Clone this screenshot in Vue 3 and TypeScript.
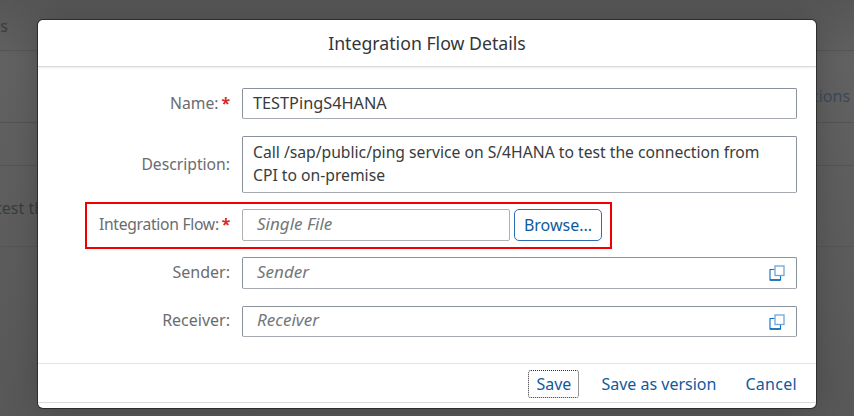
<script setup lang="ts">
interface Row { label: string; placeholder: string }
const valueRows: Row[] = [
  { label: 'Sender:', placeholder: 'Sender' },
  { label: 'Receiver:', placeholder: 'Receiver' },
]
</script>

<template>
  <div class="page">
    <div class="backdrop">
      <div class="bg-row bg-one"><span class="bg-text clip-left">Artifacts</span></div>
      <div class="bg-row bg-two"><span class="bg-text bg-actions">Actions</span></div>
      <div class="bg-row bg-three"></div>
      <div class="bg-row bg-four"><span class="bg-text clip-test">test the</span></div>
    </div>

    <section class="dialog">
      <header class="dialog-head">Integration Flow Details</header>
      <div class="dialog-body">
        <div class="row row-name">
          <label class="label">Name:<span class="star">*</span></label>
          <div class="field name-field">TESTPingS4HANA</div>
        </div>
        <div class="row row-desc">
          <label class="label">Description:</label>
          <div class="field area">Call /sap/public/ping service on S/4HANA to test the connection from<br />CPI to on-premise</div>
        </div>
        <div class="row row-file">
          <label class="label">Integration Flow:<span class="star">*</span></label>
          <div class="file-group">
            <div class="field placeholder file-input">Single File</div>
            <button class="browse" type="button">Browse...</button>
          </div>
          <div class="highlight"></div>
        </div>
        <div v-for="r in valueRows" :key="r.label" class="row row-value">
          <label class="label">{{ r.label }}</label>
          <div class="field placeholder with-icon">
            <span>{{ r.placeholder }}</span>
            <svg class="icon" width="16" height="16" viewBox="0 0 16 16" fill="none">
              <path d="M5.5 4.5H1v10.5h10.5V11" stroke="#0a6ed1" stroke-width="1.1" />
              <path d="M1 15h10.5" stroke="#0a5ea8" stroke-width="1.4" />
              <rect x="6" y="1" width="9" height="9.5" stroke="#6ea6dc" stroke-width="1.3" />
            </svg>
          </div>
        </div>
      </div>
      <footer class="dialog-foot">
        <button class="action focused" type="button">Save</button>
        <button class="action" type="button">Save as version</button>
        <button class="action last" type="button">Cancel</button>
      </footer>
      <div class="dialog-end"></div>
    </section>
  </div>
</template>

<style>
html, body { margin: 0; background: #5e5e5e; }
</style>

<style scoped>
.page {
  position: relative;
  width: 854px;
  height: 416px;
  overflow: hidden;
  font-family: "Noto Sans", "Open Sans", sans-serif;
  background: #5d5d5d;
}
.backdrop {
  height: 100%;
  background: linear-gradient(180deg, #565656 0, #626262 60px, #5e5e5e 200px, #585858 416px);
}
.bg-row { box-sizing: border-box; border-bottom: 1px solid #555; position: relative; }
.bg-one { height: 51px; }
.bg-two { height: 72px; }
.bg-three { height: 43px; }
.bg-four { height: 81px; }
.bg-text { color: #383d42; font-size: 16px; white-space: nowrap; }
.clip-left { position: absolute; right: 846px; top: 15px; }
.bg-actions { position: absolute; left: 795px; top: 34px; color: #3c4a5a; }
.clip-test { position: absolute; left: -4px; top: 31px; }

.dialog {
  position: absolute;
  left: 38px;
  top: 20px;
  width: 778px;
  height: 388px;
  box-sizing: border-box;
  display: flex;
  flex-direction: column;
  background: #fff;
  border-radius: 5px;
  box-shadow: 0 0 0 1px #2e2e2e, 0 0 36px rgba(0, 0, 0, 0.22);
  color: #32363a;
}
.dialog-head {
  height: 47px;
  flex: none;
  box-sizing: border-box;
  border-bottom: 1px solid #d9d9d9;
  box-shadow: 0 1px 2px rgba(0, 0, 0, 0.08);
  display: flex;
  align-items: center;
  justify-content: center;
  font-size: 17.7px;
  padding-bottom: 1px;
  color: #32363a;
}
.dialog-body { flex: 1; padding-top: 21px; padding-right: 19px; }
.row {
  position: relative;
  display: grid;
  grid-template-columns: 192px 1fr;
  column-gap: 12px;
  align-items: center;
}
.row-name { height: 31px; margin-bottom: 17px; }
.row-desc { height: 57px; margin-bottom: 16px; }
.row-file { height: 32px; margin-bottom: 16px; }
.row-value { height: 32px; margin-bottom: 17px; }
.row-value:last-child { height: 31px; margin-bottom: 0; }

.label {
  text-align: right;
  color: #6a6d70;
  font-size: 15.7px;
  line-height: 22px;
  white-space: nowrap;
  padding-bottom: 2px;
}
.row-file .label { letter-spacing: -0.3px; }
.row-value .label { font-size: 16px; }
.row-value:last-child .label { padding-bottom: 4px; }
.star { color: #d5282b; font-weight: 700; margin-left: 3px; }
.field {
  box-sizing: border-box;
  height: 100%;
  border: 1px solid #89919a;
  border-bottom-color: #a5abb1;
  border-radius: 2px;
  padding: 0 10px;
  display: flex;
  align-items: center;
  font-size: 15.7px;
  color: #383c40;
  background: #fff;
}
.name-field { font-size: 16.3px; padding-bottom: 2px; }
.area {
  display: block;
  padding-top: 4px;
  line-height: 23px;
  white-space: nowrap;
}
.placeholder { color: #74777a; font-style: italic; font-size: 17px; padding-left: 14px; padding-bottom: 4px; }
.with-icon { justify-content: space-between; padding-right: 11px; }
.with-icon .icon { flex: none; margin-top: 4px; }
.file-group { display: flex; gap: 4px; height: 100%; }
.file-input { width: 268px; flex: none; border-color: #aeb2b5; }
.browse {
  box-sizing: border-box;
  width: 88px;
  height: 100%;
  background: #fff;
  border: 1px solid #2d6fae;
  border-radius: 5px;
  color: #0f5a9e;
  font: inherit;
  font-size: 16px;
  padding: 0;
}
.highlight {
  position: absolute;
  left: 47px;
  top: -7px;
  width: 527px;
  height: 47px;
  box-sizing: border-box;
  border: 2px solid #f00000;
  pointer-events: none;
}
.dialog-foot {
  flex: none;
  height: 39px;
  box-sizing: border-box;
  border-top: 1px solid #e2e2e2;
  display: flex;
  align-items: center;
  justify-content: flex-end;
  padding-top: 2px;
  padding-right: 19px;
  gap: 13px;
}
.action {
  background: none;
  border: 1px solid transparent;
  height: 28px;
  padding: 0 7px;
  margin: 0;
  font: inherit;
  font-size: 16px;
  color: #0f5a9e;
  border-radius: 3px;
  white-space: nowrap;
}
.action.last { padding-right: 0; border-right: 0; letter-spacing: 0.3px; }
.focused { border: 1px dotted #333; margin-right: 1px; }
.dialog-end {
  flex: none;
  height: 5px;
  border-top: 1px solid #d9d9d9;
  border-radius: 0 0 5px 5px;
}
</style>
